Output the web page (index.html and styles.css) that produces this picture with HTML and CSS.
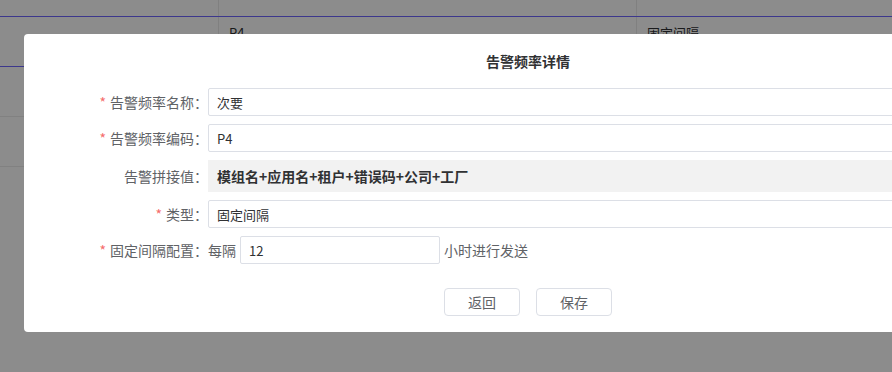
FILE: index.html
```html
<!DOCTYPE html>
<html lang="zh-CN">
<head>
  <meta charset="UTF-8">
  <meta name="viewport" content="width=device-width, initial-scale=1.0"/>
  <title>告警频率详情</title>
  <link rel="stylesheet" href="styles.css">
</head>
<body>

  <!-- tabella sotto la maschera -->
  <div class="table">
    <div class="row head">
      <div class="cell"></div>
      <div class="cell"></div>
      <div class="cell"></div>
    </div>
    <div class="row active">
      <div class="cell"></div>
      <div class="cell">P4</div>
      <div class="cell">固定间隔</div>
    </div>
    <div class="row">
      <div class="cell"></div>
      <div class="cell"></div>
      <div class="cell"></div>
    </div>
    <div class="row">
      <div class="cell"></div>
      <div class="cell"></div>
      <div class="cell"></div>
    </div>
  </div>

  <div class="mask"></div>

  <div class="dialog">
    <div class="dialog-header">告警频率详情</div>

    <form class="form">
      <div class="form-row">
        <label class="label required">告警频率名称：</label>
        <input class="input" type="text" value="次要">
      </div>
      <div class="form-row">
        <label class="label required">告警频率编码：</label>
        <input class="input" type="text" value="P4">
      </div>
      <div class="form-row">
        <label class="label">告警拼接值：</label>
        <div class="static">模组名+应用名+租户+错误码+公司+工厂</div>
      </div>
      <div class="form-row">
        <label class="label required">类型：</label>
        <input class="input" type="text" value="固定间隔">
      </div>
      <div class="form-row">
        <label class="label required">固定间隔配置：</label>
        <span class="text">每隔</span>
        <input class="input short" type="text" value="12">
        <span class="text">小时进行发送</span>
      </div>
    </form>

    <div class="dialog-footer">
      <button class="btn" type="button">返回</button>
      <button class="btn" type="button">保存</button>
    </div>
  </div>

</body>
</html>
```

FILE: styles.css
```css
:root {
  --text:        #303133;
  --label:       #606266;
  --border:      #dcdfe6;
  --danger:      #f56c6c;
  --font:        "Noto Sans CJK SC", "Noto Sans", Arial, sans-serif;
}
* { box-sizing: border-box; margin:0; padding:0 }
body {
  font-family: var(--font);
  font-size: 14px;
  color: var(--text);
  background: #fff;
  width: 892px; height: 372px;
  overflow: hidden;
  position: relative;
}

/* tabella */
.table { width:100%; }
.row {
  display:grid;
  grid-template-columns:218px 418px 1fr;
  height:50px;
  border-bottom:1px solid #ebebeb;
}
.row.head { height:17px; border-bottom-color:#6e64ff; }
.row.active { border-bottom-color:#6e64ff; }
.cell {
  padding:6px 10px 0;
  line-height:20px;
  font-size:13px;
  color:#303133;
}
.cell + .cell { border-left:1px solid #e9e9e9; }

/* maschera */
.mask {
  position:absolute; top:0; left:0; right:0; bottom:0;
  background:rgba(0,0,0,0.45);
}

/* dialog */
.dialog {
  position:absolute; left:24px; top:34px;
  width:1008px;
  background:#fff;
  border-radius:4px;
  padding-bottom:16px;
}
.dialog-header {
  height:54px;
  display:flex; align-items:center; justify-content:center;
  font-size:14px;
  font-weight:bold;
  color:var(--text);
}
.form { display:flex; flex-direction:column; gap:8px; }
.form-row { display:flex; align-items:center; }
.label {
  width:184px; flex-shrink:0;
  text-align:right;
  color:var(--label);
  font-size:14px;
}
.label.required::before {
  content:"*";
  color:var(--danger);
  margin-right:4px;
}
.input {
  flex:1;
  height:28px;
  border:1px solid var(--border);
  border-radius:2px;
  padding:0 8px;
  font:inherit;
  font-size:13px;
  color:var(--text);
  outline:none;
  background:#fff;
}
.input.short { flex:none; width:200px; margin:0 4px; }
.static {
  flex:1;
  height:32px;
  line-height:32px;
  background:#f2f2f2;
  padding:0 9px;
  font-weight:bold;
  color:var(--text);
}
.text { color:var(--label); }

.dialog-footer {
  margin-top:24px;
  display:flex; justify-content:center; gap:16px;
}
.btn {
  width:76px; height:28px;
  background:#fff;
  border:1px solid var(--border);
  border-radius:4px;
  font:inherit;
  color:var(--label);
  cursor:pointer;
}
```
